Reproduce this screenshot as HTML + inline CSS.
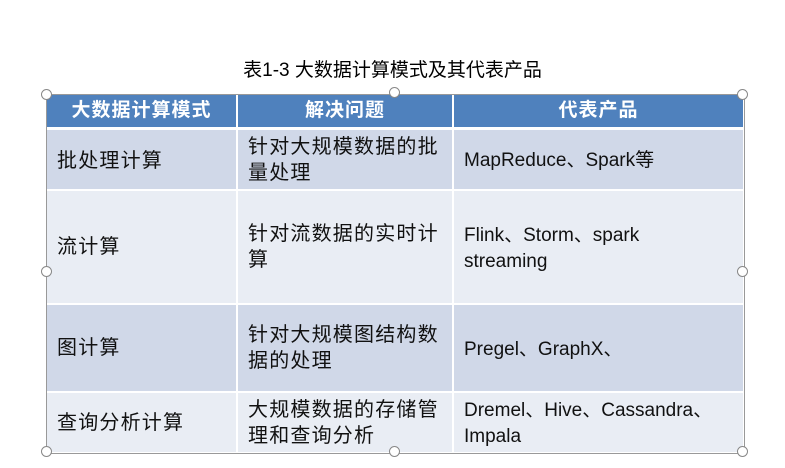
<!DOCTYPE html>
<html><head><meta charset="utf-8"><style>
body{margin:0;width:785px;height:468px;background:#fff;position:relative;overflow:hidden;font-family:"Liberation Sans","Noto Sans CJK SC",sans-serif;}
.t{position:absolute;left:0;width:785px;top:55px;text-align:center;font-size:19px;color:#000;}
.c{position:absolute;box-sizing:border-box;font-size:19px;color:#111;line-height:26px;padding-left:10px;display:flex;align-items:center;}
.cj{font-size:20px;letter-spacing:1.2px;}
.h{background:#4F81BD;color:#fff;font-weight:bold;justify-content:center;padding:0;font-size:19px;letter-spacing:1px;}
.d{background:#D0D8E8}.l{background:#E9EDF4}
.g{position:absolute;width:9px;height:9px;border:1.5px solid #888;border-radius:50%;background:#fff;}
.bd{position:absolute;left:46px;top:94px;width:697px;height:358px;border:1px solid #999;}
</style></head><body>
<div class="t">表1-3 大数据计算模式及其代表产品</div>
<div class="bd"></div>
<div class="c h" style="left:47px;top:95px;width:189px;height:32px">大数据计算模式</div>
<div class="c h" style="left:238px;top:95px;width:214px;height:32px">解决问题</div>
<div class="c h" style="left:454px;top:95px;width:289px;height:32px">代表产品</div>

<div class="c d cj" style="left:47px;top:130px;width:189px;height:59px;padding-top:3px">批处理计算</div>
<div class="c d cj" style="left:238px;top:130px;width:214px;height:59px">针对大规模数据的批<br>量处理</div>
<div class="c d" style="left:454px;top:130px;width:289px;height:59px;padding-top:3px">MapReduce、Spark等</div>

<div class="c l cj" style="left:47px;top:191px;width:189px;height:112px">流计算</div>
<div class="c l cj" style="left:238px;top:191px;width:214px;height:112px">针对流数据的实时计<br>算</div>
<div class="c l" style="left:454px;top:191px;width:289px;height:112px"><span style="margin-top:3px">Flink、Storm、spark<br>streaming</span></div>

<div class="c d cj" style="left:47px;top:305px;width:189px;height:86px">图计算</div>
<div class="c d cj" style="left:238px;top:305px;width:214px;height:86px">针对大规模图结构数<br>据的处理</div>
<div class="c d" style="left:454px;top:305px;width:289px;height:86px;padding-top:3px">Pregel、GraphX、</div>

<div class="c l cj" style="left:47px;top:393px;width:189px;height:59px">查询分析计算</div>
<div class="c l cj" style="left:238px;top:393px;width:214px;height:59px">大规模数据的存储管<br>理和查询分析</div>
<div class="c l" style="left:454px;top:393px;width:289px;height:59px;padding-top:3px">Dremel、Hive、Cassandra、<br>Impala</div>

<div class="g" style="left:41px;top:89px"></div>
<div class="g" style="left:389px;top:87px"></div>
<div class="g" style="left:737px;top:89px"></div>
<div class="g" style="left:41px;top:266px"></div>
<div class="g" style="left:737px;top:266px"></div>
<div class="g" style="left:41px;top:446px"></div>
<div class="g" style="left:389px;top:446px"></div>
<div class="g" style="left:737px;top:446px"></div>
</body></html>
